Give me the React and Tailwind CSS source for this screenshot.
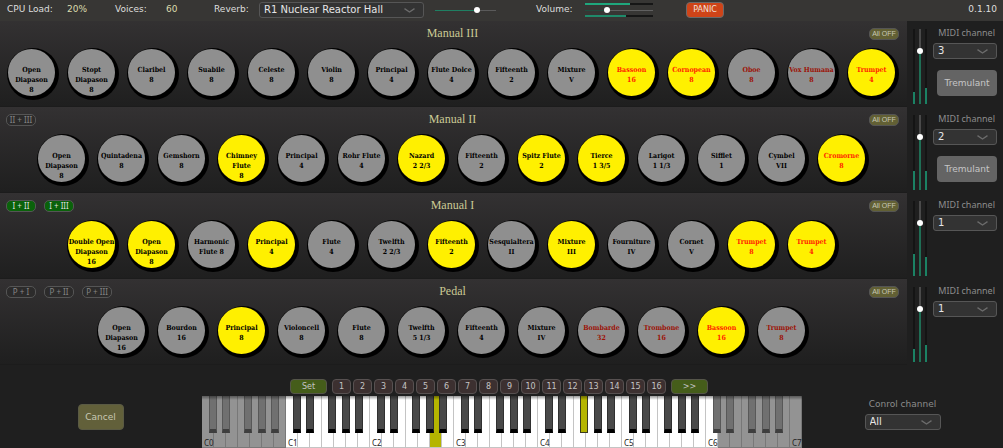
import React from "react";

const MANUALS = [
  {
    title: "Manual III",
    couplers: [],
    channel: "3",
    tremulant: true,
    levels: ["h-[12px]", "h-[16px]"],
    stops: [
      { lines: ["Open", "Diapason", "8"] },
      { lines: ["Stopt", "Diapason", "8"] },
      { lines: ["Claribel", "8"] },
      { lines: ["Suabile", "8"] },
      { lines: ["Celeste", "8"] },
      { lines: ["Violin", "8"] },
      { lines: ["Principal", "4"] },
      { lines: ["Flute Dolce", "4"] },
      { lines: ["Fifteenth", "2"] },
      { lines: ["Mixture", "V"] },
      { lines: ["Bassoon", "16"], on: true, reed: true },
      { lines: ["Cornopean", "8"], on: true, reed: true },
      { lines: ["Oboe", "8"], reed: true },
      { lines: ["Vox Humana", "8"], reed: true },
      { lines: ["Trumpet", "4"], on: true, reed: true },
    ],
  },
  {
    title: "Manual II",
    couplers: [{ name: "II + III" }],
    channel: "2",
    tremulant: true,
    levels: ["h-[19px]", "h-[19px]"],
    stops: [
      { lines: ["Open", "Diapason", "8"] },
      { lines: ["Quintadena", "8"] },
      { lines: ["Gemshorn", "8"] },
      { lines: ["Chimney", "Flute", "8"], on: true },
      { lines: ["Principal", "4"] },
      { lines: ["Rohr Flute", "4"] },
      { lines: ["Nazard", "2 2/3"], on: true },
      { lines: ["Fifteenth", "2"] },
      { lines: ["Spitz Flute", "2"], on: true },
      { lines: ["Tierce", "1 3/5"], on: true },
      { lines: ["Larigot", "1 1/3"] },
      { lines: ["Sifflet", "1"] },
      { lines: ["Cymbel", "VII"] },
      { lines: ["Cromorne", "8"], on: true, reed: true },
    ],
  },
  {
    title: "Manual I",
    couplers: [
      { name: "I + II", on: true },
      { name: "I + III", on: true },
    ],
    channel: "1",
    tremulant: false,
    levels: ["h-[22px]", "h-[19px]"],
    stops: [
      { lines: ["Double Open", "Diapason", "16"], on: true },
      { lines: ["Open", "Diapason", "8"], on: true },
      { lines: ["Harmonic", "Flute 8"] },
      { lines: ["Principal", "4"], on: true },
      { lines: ["Flute", "4"] },
      { lines: ["Twelfth", "2 2/3"] },
      { lines: ["Fifteenth", "2"], on: true },
      { lines: ["Sesquialtera", "II"] },
      { lines: ["Mixture", "III"], on: true },
      { lines: ["Fourniture", "IV"] },
      { lines: ["Cornet", "V"] },
      { lines: ["Trumpet", "8"], on: true, reed: true },
      { lines: ["Trumpet", "4"], on: true, reed: true },
    ],
  },
  {
    title: "Pedal",
    couplers: [{ name: "P + I" }, { name: "P + II" }, { name: "P + III" }],
    channel: "1",
    tremulant: false,
    levels: ["h-[13px]", "h-[17px]"],
    stops: [
      { lines: ["Open", "Diapason", "16"] },
      { lines: ["Bourdon", "16"] },
      { lines: ["Principal", "8"], on: true },
      { lines: ["Violoncell", "8"] },
      { lines: ["Flute", "8"] },
      { lines: ["Twelfth", "5 1/3"] },
      { lines: ["Fifteenth", "4"] },
      { lines: ["Mixture", "IV"] },
      { lines: ["Bombarde", "32"], reed: true },
      { lines: ["Trombone", "16"], reed: true },
      { lines: ["Bassoon", "16"], on: true, reed: true },
      { lines: ["Trumpet", "8"], reed: true },
    ],
  },
];

function Stop({ lines, on, reed }) {
  const face = on ? "bg-[#fff000]" : "bg-[#8f8f8f]";
  const ink = reed ? (on ? "text-[#ff1e00]" : "text-[#9c1206]") : "text-black";
  return (
    <button
      type="button"
      aria-pressed={!!on}
      className="flex size-[52px] shrink-0 rounded-full bg-black pt-px pl-px"
    >
      <span
        className={`flex size-[47px] flex-col items-center rounded-full pt-4 font-['DejaVu_Serif_Condensed','DejaVu_Serif',serif] text-[7px] leading-[10px] font-bold whitespace-nowrap ${face} ${ink}`}
      >
        {lines.map((line, i) => (
          <span key={i}>{line}</span>
        ))}
      </span>
    </button>
  );
}

function Select({ id, label, value, options, className }) {
  return (
    <div className={`relative h-4 ${className}`}>
      <select
        id={id}
        aria-label={label}
        defaultValue={value}
        className="block h-full w-full appearance-none rounded-[3px] border border-[#565656] bg-[#333333] pl-1 text-[10px] leading-[14px] text-[#e6e6e6]"
      >
        {options.map((o) => (
          <option key={o}>{o}</option>
        ))}
      </select>
      <svg
        viewBox="0 0 11 5"
        className="pointer-events-none absolute top-[6px] right-[9px] h-[5px] w-[11px]"
        fill="none"
        stroke="#6c6c6c"
        strokeWidth="1.3"
      >
        <path d="M0.5 0.6 L5.5 4 L10.5 0.6" />
      </svg>
    </div>
  );
}

function Level({ height }) {
  return (
    <div className="flex h-full w-[2px] flex-col justify-end bg-[#141414]">
      <div className={`bg-[#1b8264] ${height}`} />
    </div>
  );
}

const THUMB =
  "[&::-webkit-slider-thumb]:size-[6px] [&::-webkit-slider-thumb]:appearance-none [&::-webkit-slider-thumb]:rounded-full [&::-webkit-slider-thumb]:bg-white";

function Division({ id, title, couplers, stops, channel, tremulant, levels }) {
  return (
    <section className="flex h-[86px]">
      <div className="min-w-0 flex-1 border-b border-[#1c1c1c] bg-linear-to-b from-[#333132] to-[#1f1f1f]">
        <div className="grid h-[27px] grid-cols-[1fr_auto_1fr] items-start pt-[7px] pr-2 pl-[6px]">
          <div className="flex gap-2">
            {couplers.map((c) => (
              <button
                key={c.name}
                type="button"
                aria-pressed={!!c.on}
                className={`flex h-3 w-[30px] items-center justify-center rounded-[5px] border border-[#555555] font-['Noto_Sans',sans-serif] text-[8px] leading-[10px] whitespace-nowrap ${
                  c.on ? "bg-[#0a620a] text-[#dddddd]" : "bg-[#2c2b2b] text-[#858585]"
                }`}
              >
                {c.name}
              </button>
            ))}
          </div>
          <h2 className="font-['Liberation_Serif',serif] text-[12px] leading-[10px] text-[#cbca95]">
            {title}
          </h2>
          <button
            type="button"
            className="flex h-3 w-[30px] items-center justify-center justify-self-end rounded-[5px] border border-[#555555] bg-[#626034] font-['Liberation_Sans',sans-serif] text-[7px] leading-[10px] whitespace-nowrap text-[#c8c8b4]"
          >
            All OFF
          </button>
        </div>
        <div className="flex justify-center gap-2 pr-px">
          {stops.map((s, i) => (
            <Stop key={i} {...s} />
          ))}
        </div>
      </div>
      <div className="flex w-24 shrink-0 justify-between pt-[7px] pr-[6px] pl-[6px]">
        <div className="mt-px flex h-[75px] gap-[2px]">
          <Level height={levels[0]} />
          <input
            type="range"
            aria-label={`${title} volume`}
            defaultValue={72}
            className={`m-0 block h-full w-[6px] appearance-none bg-[linear-gradient(to_bottom,#4a4a4a_30%,#1f6e55_30%)] bg-[length:2px_100%] bg-center bg-no-repeat [direction:rtl] [writing-mode:vertical-lr] ${THUMB}`}
          />
          <Level height={levels[1]} />
        </div>
        <div className="flex w-16 flex-col items-end">
          <label
            htmlFor={id}
            className="pr-[2px] font-['Noto_Sans',sans-serif] text-[9px] leading-[10px] whitespace-nowrap text-[#8c8c8c]"
          >
            MIDI channel
          </label>
          <Select
            id={id}
            value={channel}
            options={["1", "2", "3", "4"]}
            className="mt-[5px] w-full"
          />
          {tremulant && (
            <button
              type="button"
              className="mt-[11px] h-[26px] w-[60px] rounded-[4px] bg-[#646464] pt-px text-[9px] text-[#c6c6c6]"
            >
              Tremulant
            </button>
          )}
        </div>
      </div>
    </section>
  );
}

const BLACK_KEYS = [
  { name: "C#", left: "left-[7px]" },
  { name: "D#", left: "left-[20px]" },
  { name: "F#", left: "left-[42px]" },
  { name: "G#", left: "left-[56px]" },
  { name: "A#", left: "left-[69px]" },
];

function WhiteKey({ name, muted, pressed }) {
  const tone = pressed ? "bg-[#b5b500]" : muted ? "bg-[#939393]" : "bg-white";
  const edge = muted ? "border-[#787878]" : "border-[#c4c4c4]";
  return (
    <button
      type="button"
      aria-label={name}
      className={`flex h-[52px] w-3 items-end border-r border-b pl-[2px] font-['Noto_Sans',sans-serif] text-[8px] leading-[9px] text-[#222222] ${tone} ${edge}`}
    >
      {name.startsWith("C") ? name : ""}
    </button>
  );
}

function BlackKey({ name, left, muted, pressed }) {
  const tone = pressed
    ? "bg-[#b5b500] border-[#3c3c1e] border-b-1"
    : muted
      ? "bg-[#707070] border-[#585858] border-b-4 border-b-[#3e3e3e]"
      : "bg-[#494949] border-[#303030] border-b-4 border-b-black";
  return (
    <button
      type="button"
      aria-label={name}
      className={`absolute top-0 h-[37px] w-2 border-x ${left} ${tone}`}
    />
  );
}

function Octave({ n }) {
  return (
    <div className="relative flex">
      {["C", "D", "E", "F", "G", "A", "B"].map((k) => (
        <WhiteKey
          key={k}
          name={k + n}
          muted={n === 0 || (n === 6 && k !== "C")}
          pressed={n === 2 && k === "A"}
        />
      ))}
      {BLACK_KEYS.map((k) => (
        <BlackKey
          key={k.name}
          name={k.name + n}
          left={k.left}
          muted={n === 0 || n === 6}
          pressed={n === 4 && k.name === "F#"}
        />
      ))}
    </div>
  );
}

function HeaderBar() {
  return (
    <header className="flex h-[21px] items-center bg-[#373634] pr-[6px] pb-px pl-[7px] text-[9px] whitespace-nowrap text-[#dedede]">
      <span className="w-[60px]">CPU Load:</span>
      <span className="w-12 text-[#dcdcae]">20%</span>
      <span className="w-[51px]">Voices:</span>
      <span className="w-12 text-[#dcdcae]">60</span>
      <label htmlFor="reverb" className="w-[45px]">
        Reverb:
      </label>
      <Select
        id="reverb"
        value="R1 Nuclear Reactor Hall"
        options={["R1 Nuclear Reactor Hall"]}
        className="w-[165px]"
      />
      <input
        type="range"
        aria-label="Reverb level"
        defaultValue={70}
        className={`mr-10 ml-[11px] h-[6px] w-[61px] appearance-none bg-[linear-gradient(to_right,#1f7f62_70%,#5a5a5a_70%)] bg-[length:100%_1px] bg-center bg-no-repeat ${THUMB}`}
      />
      <label htmlFor="volume" className="w-[49px]">
        Volume:
      </label>
      <div className="flex w-[68px] flex-col gap-[2px]">
        <div className="h-[2px] bg-[#161616]">
          <div className="h-full w-2/3 bg-[#1fa67c]" />
        </div>
        <input
          id="volume"
          type="range"
          defaultValue={30}
          className={`m-0 block h-[6px] w-full appearance-none bg-[linear-gradient(to_right,#234a3e_32%,#606060_32%)] bg-[length:100%_1px] bg-center bg-no-repeat ${THUMB}`}
        />
        <div className="h-[2px] bg-[#161616]">
          <div className="h-full w-3/5 bg-[#1f8a6a]" />
        </div>
      </div>
      <button
        type="button"
        className="ml-[33px] h-4 w-[38px] rounded-[4px] border border-[#6a6a6a] bg-[#cf4418] text-[8px] leading-[14px] text-[#f2e0da]"
      >
        PANIC
      </button>
      <span className="ml-auto">0.1.10</span>
    </header>
  );
}

function Presets() {
  return (
    <div className="flex gap-[5px] pr-[6px] text-[8px] leading-[13px] text-[#c4c4c4]">
      <button
        type="button"
        className="h-[15px] w-[37px] rounded-[4px] border border-[#55554a] bg-[#455d1a]"
      >
        Set
      </button>
      <div className="flex gap-[2px]">
        {Array.from({ length: 16 }, (_, i) => (
          <button
            key={i}
            type="button"
            className="h-[15px] w-[19px] rounded-[4px] border border-[#575151] bg-[#3c3030]"
          >
            {i + 1}
          </button>
        ))}
      </div>
      <button
        type="button"
        className="h-[15px] w-[37px] rounded-[4px] border border-[#55554a] bg-[#455d1a]"
      >
        &gt;&gt;
      </button>
    </div>
  );
}

export default function App() {
  return (
    <main className="flex min-h-screen flex-col bg-[#1f1f1f] font-['DejaVu_Sans',sans-serif]">
      <HeaderBar />
      {MANUALS.map((m) => (
        <Division key={m.title} id={`channel-${m.title.replaceAll(" ", "-")}`} {...m} />
      ))}
      <footer className="grid flex-1 grid-cols-[1fr_auto_1fr] pt-[14px] pl-px">
        <button
          type="button"
          className="mt-[25px] mr-[2px] h-[26px] w-[46px] justify-self-center rounded-[4px] border border-[#5a5a44] bg-[#62603a] pt-px text-[9px] text-[#c8c8b4]"
        >
          Cancel
        </button>
        <div className="flex flex-col items-center gap-[2px]">
          <Presets />
          <div className="relative flex">
            {[0, 1, 2, 3, 4, 5, 6].map((n) => (
              <Octave key={n} n={n} />
            ))}
            <WhiteKey name="C7" muted />
            <div className="pointer-events-none absolute inset-x-0 top-0 h-1 bg-linear-to-b from-black/40 to-transparent" />
          </div>
        </div>
        <div className="mt-5 flex flex-col items-center">
          <label
            htmlFor="control-channel"
            className="text-[9px] leading-[10px] text-[#8c8c8c]"
          >
            Conrol channel
          </label>
          <Select
            id="control-channel"
            value="All"
            options={["All", "1", "2", "3", "4"]}
            className="mt-[5px] w-[76px]"
          />
        </div>
      </footer>
    </main>
  );
}
